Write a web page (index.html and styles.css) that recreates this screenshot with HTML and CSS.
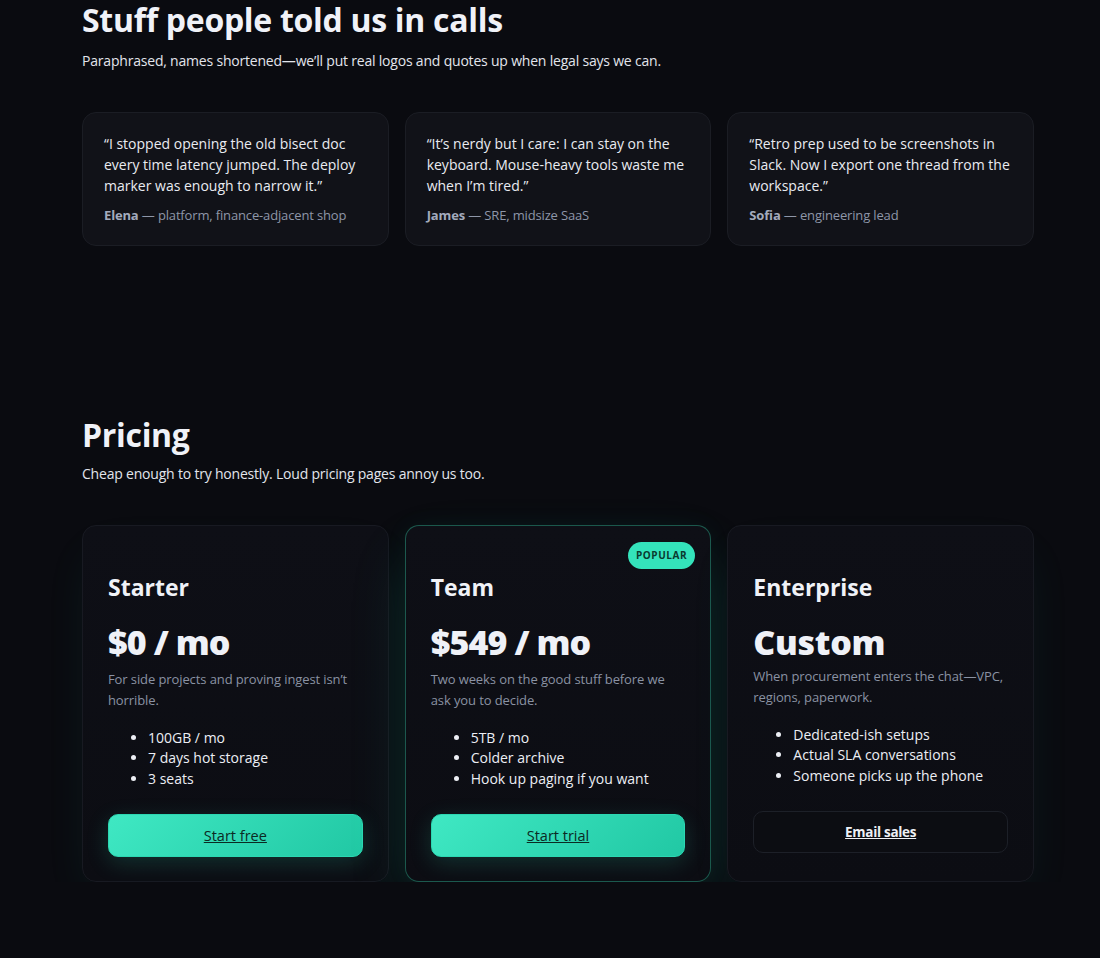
FILE: index.html
```html
<!DOCTYPE html>
<html lang="en">
<head>
<meta charset="utf-8">
<title>Pricing</title>
<link rel="stylesheet" href="styles.css">
</head>
<body>
<main class="page">
  <section class="section quotes">
    <h2 class="section-title">Stuff people told us in calls</h2>
    <p class="section-sub">Paraphrased, names shortened—we’ll put real logos and quotes up when legal says we can.</p>
    <div class="grid">
      <figure class="quote-card">
        <blockquote>“I stopped opening the old bisect doc every time latency jumped. The deploy marker was enough to narrow it.”</blockquote>
        <figcaption><strong>Elena</strong> — platform, finance-adjacent shop</figcaption>
      </figure>
      <figure class="quote-card">
        <blockquote>“It’s nerdy but I care: I can stay on the keyboard. Mouse-heavy tools waste me when I’m tired.”</blockquote>
        <figcaption><strong>James</strong> — SRE, midsize SaaS</figcaption>
      </figure>
      <figure class="quote-card">
        <blockquote>“Retro prep used to be screenshots in Slack. Now I export one thread from the workspace.”</blockquote>
        <figcaption><strong>Sofia</strong> — engineering lead</figcaption>
      </figure>
    </div>
  </section>

  <section class="section pricing">
    <h2 class="section-title">Pricing</h2>
    <p class="section-sub">Cheap enough to try honestly. Loud pricing pages annoy us too.</p>
    <div class="grid">
      <article class="plan">
        <h3 class="plan-name">Starter</h3>
        <p class="plan-price">$0 / mo</p>
        <p class="plan-desc">For side projects and proving ingest isn’t horrible.</p>
        <ul class="plan-list">
          <li>100GB / mo</li>
          <li>7 days hot storage</li>
          <li>3 seats</li>
        </ul>
        <a class="btn btn-primary" href="#">Start free</a>
      </article>
      <article class="plan plan-featured">
        <span class="badge">POPULAR</span>
        <h3 class="plan-name">Team</h3>
        <p class="plan-price">$549 / mo</p>
        <p class="plan-desc">Two weeks on the good stuff before we ask you to decide.</p>
        <ul class="plan-list">
          <li>5TB / mo</li>
          <li>Colder archive</li>
          <li>Hook up paging if you want</li>
        </ul>
        <a class="btn btn-primary" href="#">Start trial</a>
      </article>
      <article class="plan">
        <h3 class="plan-name">Enterprise</h3>
        <p class="plan-price plan-price-custom">Custom</p>
        <p class="plan-desc">When procurement enters the chat—VPC, regions, paperwork.</p>
        <ul class="plan-list">
          <li>Dedicated-ish setups</li>
          <li>Actual SLA conversations</li>
          <li>Someone picks up the phone</li>
        </ul>
        <a class="btn btn-ghost" href="#">Email sales</a>
      </article>
    </div>
  </section>
</main>
</body>
</html>
```

FILE: styles.css
```css
* {
  box-sizing: border-box;
}

html,
body {
  margin: 0;
  background: #0a0b10;
}

body {
  color: #e7e9f0;
  font-family: "Open Sans", "Noto Sans", "Liberation Sans", sans-serif;
  font-size: 14px;
  line-height: 1.45;
}

.page {
  width: 952px;
  margin-left: 82px;
}

.section-title {
  margin: 0;
  font-size: 32px;
  font-weight: 700;
  line-height: 1.2;
  letter-spacing: -0.3px;
  color: #f0f2f8;
}

.section-sub {
  margin: 10px 0 0;
  font-size: 14px;
  letter-spacing: -0.2px;
  color: #e2e5ec;
}

.quotes {
  padding-top: 1px;
}

.quotes .section-sub {
  margin-top: 12px;
}

.pricing {
  margin-top: 170px;
}

.grid {
  display: grid;
  grid-template-columns: repeat(3, 1fr);
  gap: 16px;
  margin-top: 40px;
  align-items: start;
}

.pricing .grid {
  margin-top: 41px;
  align-items: stretch;
}

/* testimonial cards */
.quote-card {
  margin: 0;
  padding: 20px 21px 19px;
  background: #111218;
  border: 1px solid #1b1d24;
  border-radius: 14px;
}

.quote-card blockquote {
  margin: 0;
  font-size: 14px;
  line-height: 21px;
  color: #e9ebf1;
}

.quote-card figcaption {
  margin-top: 9px;
  font-size: 13px;
  line-height: 21px;
  letter-spacing: -0.15px;
  color: #8e96a8;
}

.quote-card strong {
  color: #a3abbd;
  font-weight: 700;
}

/* pricing plans */
.plan {
  position: relative;
  display: flex;
  flex-direction: column;
  padding: 48px 25px 24px;
  background: linear-gradient(180deg, #0e0f16 0%, #0c0d13 100%);
  border: 1px solid #181a22;
  border-radius: 14px;
  box-shadow: 0 22px 50px -12px rgba(40, 200, 165, 0.1);
}

.plan-featured {
  border-color: rgba(52, 211, 170, 0.38);
  box-shadow: 0 28px 64px -8px rgba(40, 200, 165, 0.17), 0 0 24px rgba(40, 200, 165, 0.05);
}

.badge {
  position: absolute;
  top: 16px;
  right: 15px;
  padding: 6px 8px;
  font-size: 10px;
  font-weight: 700;
  line-height: 15px;
  letter-spacing: 0.6px;
  color: #0a3a2f;
  background: #34e3bb;
  border-radius: 999px;
}

.plan-name {
  margin: 0;
  font-size: 23px;
  font-weight: 700;
  line-height: 1.2;
  color: #f0f2f7;
}

.plan-price {
  margin: 20px 0 0;
  font-size: 34px;
  font-weight: 800;
  line-height: 1.2;
  letter-spacing: -0.9px;
  word-spacing: 0;
  color: #eff1f7;
}

.plan-price-custom {
  margin-bottom: -3px;
  letter-spacing: -0.3px;
}

.plan-desc {
  margin: 6px 0 0;
  font-size: 13px;
  line-height: 21px;
  letter-spacing: -0.1px;
  color: #8a92a3;
}

.plan-list {
  margin: 17px 0 0;
  padding-left: 40px;
  font-size: 14px;
  line-height: 20.5px;
  color: #eceef4;
}

.btn {
  display: block;
  margin-top: 25px;
  height: 43px;
  font-size: 14.5px;
  line-height: 41px;
  text-align: center;
  border-radius: 10px;
}

.btn-primary {
  color: #0b2a23;
  background: linear-gradient(135deg, #3fe8c3 0%, #21c8a4 100%);
  border: 1px solid #2bd8b2;
  box-shadow: 0 6px 22px rgba(45, 215, 175, 0.18);
}

.btn-ghost {
  height: 42px;
  color: #eef0f5;
  font-size: 13.5px;
  font-weight: 700;
  letter-spacing: -0.3px;
  background: #0c0d12;
  border: 1px solid #1d2028;
}
```
